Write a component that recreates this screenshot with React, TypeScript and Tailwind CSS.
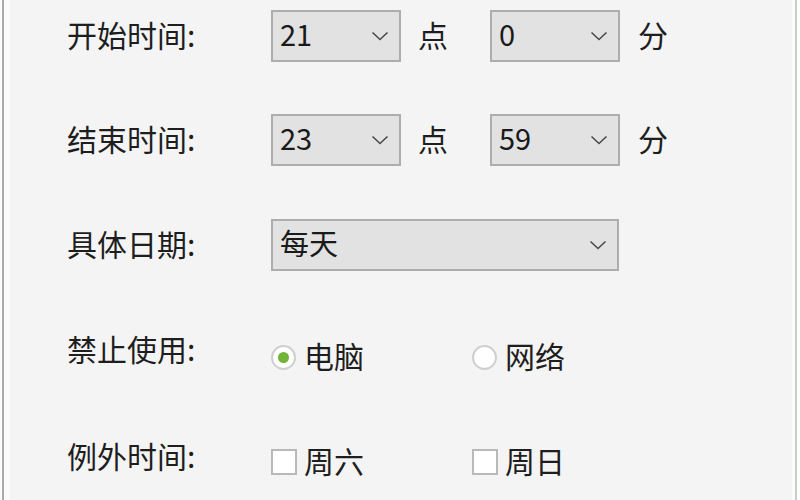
import React from "react";

const font = { fontFamily: '"Noto Sans CJK SC", "Noto Sans", sans-serif' };

function Chevron() {
  return (
    <svg width="18" height="10" viewBox="0 0 18 10" className="shrink-0">
      <path d="M1.5 1.5 L9 8.5 L16.5 1.5" fill="none" stroke="#4a4a4a" strokeWidth="1.6" />
    </svg>
  );
}

function Select({ value, w }: { value: string; w: string }) {
  return (
    <div
      className={`${w} h-[52px] bg-[#e2e2e2] border-2 border-[#adadad] flex items-center justify-between pl-[7px] pr-[10px] text-[29px] text-[#1a1a1a]`}
    >
      <span className="leading-none mb-[5px]">{value}</span>
      <Chevron />
    </div>
  );
}

function Label({ text, cls = "mb-[5px]" }: { text: string; cls?: string }) {
  return (
    <div className={`w-[204px] shrink-0 text-[30px] leading-none text-[#1e1e1e] ${cls}`}>{text}</div>
  );
}

export default function App() {
  return (
    <div className="w-[800px] h-[500px] flex bg-white overflow-hidden" style={font}>
      <div className="w-[2px] bg-[#fbfbfb]" />
      <div className="w-[2px] bg-[#a9a9a9]" />
      <div className="w-[6px] bg-[#fafafa]" />
      <div className="flex-1 bg-[#f4f4f4] pl-[57px] flex flex-col">
        <div className="mt-[10px] h-[52px] flex items-center">
          <Label text="开始时间:" />
          <Select value="21" w="w-[130px]" />
          <span className="ml-[17px] w-[72px] text-[30px] text-[#1e1e1e] leading-none mb-[5px]">点</span>
          <Select value="0" w="w-[130px]" />
          <span className="ml-[18px] text-[30px] text-[#1e1e1e] leading-none mb-[5px]">分</span>
        </div>
        <div className="mt-[52px] h-[52px] flex items-center">
          <Label text="结束时间:" />
          <Select value="23" w="w-[130px]" />
          <span className="ml-[17px] w-[72px] text-[30px] text-[#1e1e1e] leading-none mb-[5px]">点</span>
          <Select value="59" w="w-[130px]" />
          <span className="ml-[18px] text-[30px] text-[#1e1e1e] leading-none mb-[5px]">分</span>
        </div>
        <div className="mt-[53px] h-[52px] flex items-center">
          <Label text="具体日期:" />
          <Select value="每天" w="w-[348px]" />
        </div>
        <div className="mt-[60px] h-[52px] flex items-center">
          <Label text="禁止使用:" cls="mb-[19px]" />
          <div className="w-[201px] flex items-center">
            <div className="w-[25px] h-[25px] rounded-full border-2 border-[#cfcfcf] bg-white flex items-center justify-center">
              <div className="w-[11px] h-[11px] rounded-full bg-[#72b33a]" />
            </div>
            <span className="ml-[8px] text-[30px] text-[#1e1e1e] leading-none mb-[4px]">电脑</span>
          </div>
          <div className="flex items-center">
            <div className="w-[25px] h-[25px] rounded-full border-2 border-[#cfcfcf] bg-white" />
            <span className="ml-[8px] text-[30px] text-[#1e1e1e] leading-none mb-[4px]">网络</span>
          </div>
        </div>
        <div className="mt-[53px] h-[52px] flex items-center">
          <Label text="例外时间:" cls="mb-[15px]" />
          <div className="w-[201px] flex items-center">
            <div className="w-[26px] h-[26px] border-2 border-[#b9b9b9] bg-white" />
            <span className="ml-[7px] text-[30px] text-[#1e1e1e] leading-none mb-[4px]">周六</span>
          </div>
          <div className="flex items-center">
            <div className="w-[26px] h-[26px] border-2 border-[#b9b9b9] bg-white" />
            <span className="ml-[7px] text-[30px] text-[#1e1e1e] leading-none mb-[4px]">周日</span>
          </div>
        </div>
      </div>
      <div className="w-[3px] bg-[#fbfbfb]" />
      <div className="w-[2px] bg-[#c6cfc0]" />
      <div className="w-[3px] bg-white" />
    </div>
  );
}
